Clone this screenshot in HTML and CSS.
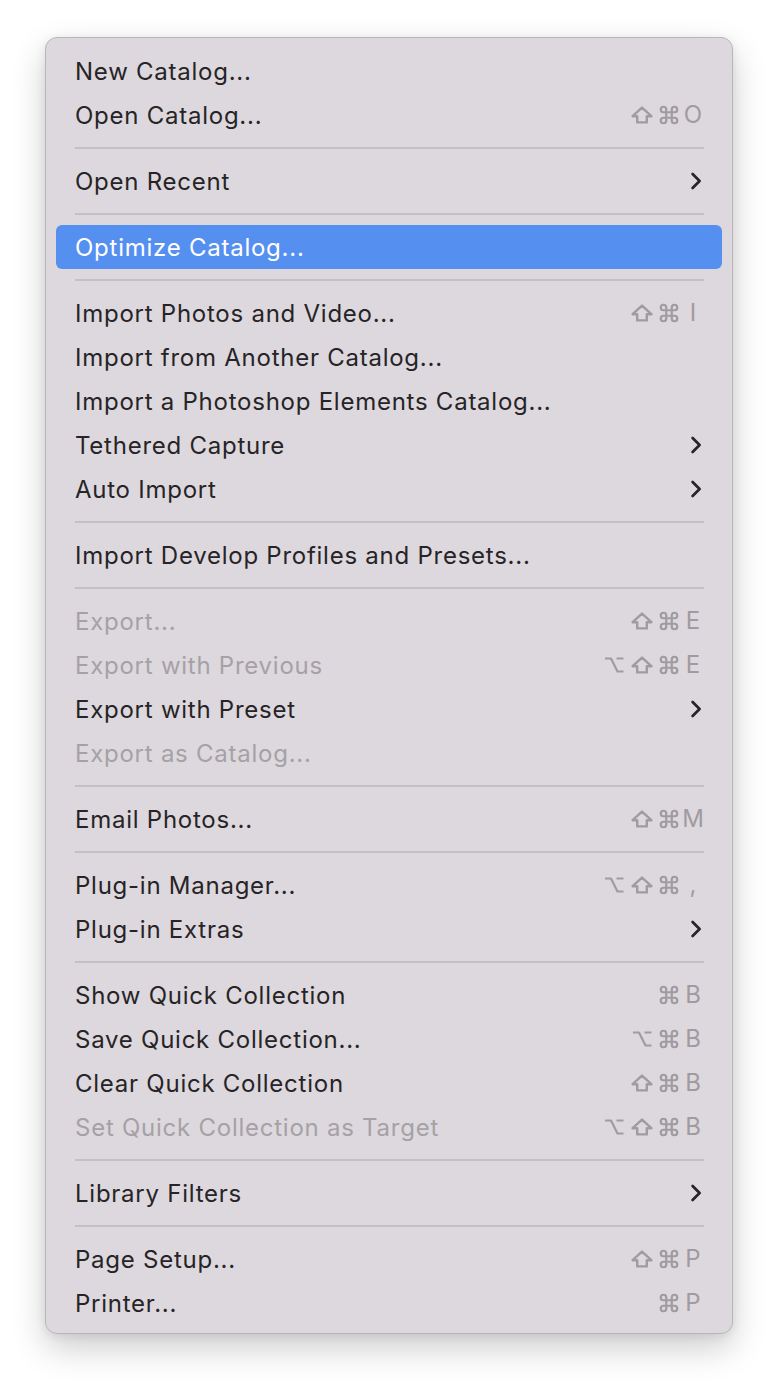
FILE: index.html
```html
<!DOCTYPE html>
<html>
<head>
<meta charset="utf-8">
<link rel="stylesheet" href="styles.css">
</head>
<body>
<svg width="0" height="0" class="defs">
  <defs>
    <symbol id="opt" viewBox="0 0 20 18"><path d="M1 2.5H7L13.5 15.5H19.5M12.5 2.5H19.5" fill="none" stroke="currentColor" stroke-width="2.2" stroke-linejoin="round"/></symbol>
    <symbol id="shift" viewBox="0 0 22 18"><path d="M11 1.6L20.4 10.2H15.8V16.4H6.2V10.2H1.6Z" fill="none" stroke="currentColor" stroke-width="2.4" stroke-linejoin="round"/></symbol>
    <symbol id="cmd" viewBox="0 0 24 24"><path d="M15 6v12a3 3 0 1 0 3-3H6a3 3 0 1 0 3 3V6a3 3 0 1 0-3 3h12a3 3 0 1 0-3-3" fill="none" stroke="currentColor" stroke-width="2.4" stroke-linejoin="round"/></symbol>
    <symbol id="chev" viewBox="0 0 14 22"><path d="M2.6 4L9.6 11L2.6 18" fill="none" stroke="currentColor" stroke-width="2.7" stroke-linecap="round" stroke-linejoin="round"/></symbol>
  </defs>
</svg>
<div class="menu">
  <div class="item"><span class="label">New Catalog...</span></div>
  <div class="item"><span class="label">Open Catalog...</span>
    <span class="keys"><span class="mod"><svg class="i-shift"><use href="#shift"/></svg></span><span class="mod cm"><svg class="i-cmd"><use href="#cmd"/></svg></span><span class="key">O</span></span></div>
  <div class="sep"></div>
  <div class="item"><span class="label">Open Recent</span><svg class="chev"><use href="#chev"/></svg></div>
  <div class="sep"></div>
  <div class="item active"><span class="label">Optimize Catalog...</span></div>
  <div class="sep"></div>
  <div class="item"><span class="label">Import Photos and Video...</span>
    <span class="keys"><span class="mod"><svg class="i-shift"><use href="#shift"/></svg></span><span class="mod cm"><svg class="i-cmd"><use href="#cmd"/></svg></span><span class="key thin">I</span></span></div>
  <div class="item"><span class="label">Import from Another Catalog...</span></div>
  <div class="item"><span class="label">Import a Photoshop Elements Catalog...</span></div>
  <div class="item"><span class="label">Tethered Capture</span><svg class="chev"><use href="#chev"/></svg></div>
  <div class="item"><span class="label">Auto Import</span><svg class="chev"><use href="#chev"/></svg></div>
  <div class="sep"></div>
  <div class="item"><span class="label">Import Develop Profiles and Presets...</span></div>
  <div class="sep"></div>
  <div class="item disabled"><span class="label">Export...</span>
    <span class="keys"><span class="mod"><svg class="i-shift"><use href="#shift"/></svg></span><span class="mod cm"><svg class="i-cmd"><use href="#cmd"/></svg></span><span class="key">E</span></span></div>
  <div class="item disabled"><span class="label">Export with Previous</span>
    <span class="keys"><span class="mod"><svg class="i-opt"><use href="#opt"/></svg></span><span class="mod"><svg class="i-shift"><use href="#shift"/></svg></span><span class="mod cm"><svg class="i-cmd"><use href="#cmd"/></svg></span><span class="key">E</span></span></div>
  <div class="item"><span class="label">Export with Preset</span><svg class="chev"><use href="#chev"/></svg></div>
  <div class="item disabled"><span class="label">Export as Catalog...</span></div>
  <div class="sep"></div>
  <div class="item"><span class="label">Email Photos...</span>
    <span class="keys"><span class="mod"><svg class="i-shift"><use href="#shift"/></svg></span><span class="mod cm"><svg class="i-cmd"><use href="#cmd"/></svg></span><span class="key">M</span></span></div>
  <div class="sep"></div>
  <div class="item"><span class="label">Plug-in Manager...</span>
    <span class="keys"><span class="mod"><svg class="i-opt"><use href="#opt"/></svg></span><span class="mod"><svg class="i-shift"><use href="#shift"/></svg></span><span class="mod cm"><svg class="i-cmd"><use href="#cmd"/></svg></span><span class="key">,</span></span></div>
  <div class="item"><span class="label">Plug-in Extras</span><svg class="chev"><use href="#chev"/></svg></div>
  <div class="sep"></div>
  <div class="item"><span class="label">Show Quick Collection</span>
    <span class="keys"><span class="mod cm"><svg class="i-cmd"><use href="#cmd"/></svg></span><span class="key">B</span></span></div>
  <div class="item"><span class="label">Save Quick Collection...</span>
    <span class="keys"><span class="mod"><svg class="i-opt"><use href="#opt"/></svg></span><span class="mod cm"><svg class="i-cmd"><use href="#cmd"/></svg></span><span class="key">B</span></span></div>
  <div class="item"><span class="label">Clear Quick Collection</span>
    <span class="keys"><span class="mod"><svg class="i-shift"><use href="#shift"/></svg></span><span class="mod cm"><svg class="i-cmd"><use href="#cmd"/></svg></span><span class="key">B</span></span></div>
  <div class="item disabled"><span class="label">Set Quick Collection as Target</span>
    <span class="keys"><span class="mod"><svg class="i-opt"><use href="#opt"/></svg></span><span class="mod"><svg class="i-shift"><use href="#shift"/></svg></span><span class="mod cm"><svg class="i-cmd"><use href="#cmd"/></svg></span><span class="key">B</span></span></div>
  <div class="sep"></div>
  <div class="item"><span class="label">Library Filters</span><svg class="chev"><use href="#chev"/></svg></div>
  <div class="sep"></div>
  <div class="item"><span class="label">Page Setup...</span>
    <span class="keys"><span class="mod"><svg class="i-shift"><use href="#shift"/></svg></span><span class="mod cm"><svg class="i-cmd"><use href="#cmd"/></svg></span><span class="key">P</span></span></div>
  <div class="item"><span class="label">Printer...</span>
    <span class="keys"><span class="mod cm"><svg class="i-cmd"><use href="#cmd"/></svg></span><span class="key">P</span></span></div>
</div>
</body>
</html>
```

FILE: styles.css
```css
html, body {
  margin: 0;
  padding: 0;
  background: #ffffff;
}

body {
  min-height: 1388px;
}

.defs {
  position: absolute;
  width: 0;
  height: 0;
  overflow: hidden;
}

.menu {
  margin: 37px 45px 0 45px;
  padding: 11px 10px 8px 10px;
  box-sizing: content-box;
  width: 666px;
  background: #ddd8dd;
  border: 1px solid #bab5ba;
  border-radius: 12px;
  box-shadow: 0 14px 34px rgba(0, 0, 0, 0.2), 0 2px 10px rgba(0, 0, 0, 0.08);
  font-family: "Inter", "Liberation Sans", sans-serif;
  font-size: 24px;
  letter-spacing: 0.75px;
  color: #262426;
}

.item {
  height: 44px;
  display: flex;
  align-items: center;
  padding: 0 18px 0 19px;
  border-radius: 6px;
}

.label {
  flex: 1;
  white-space: nowrap;
}

.item.active {
  background: #5590f1;
  color: #ffffff;
}

.item.disabled {
  color: #a6a1a6;
}

.keys {
  display: flex;
  align-items: center;
  color: #a09ba0;
  letter-spacing: 0;
}

.mod {
  width: 28px;
  height: 20px;
  display: flex;
  align-items: center;
  justify-content: center;
}

.mod.cm {
  width: 26px;
}

.key {
  width: 22px;
  text-align: center;
  font-size: 24px;
  line-height: 1;
}

.i-opt {
  width: 20px;
  height: 18px;
}

.i-shift {
  width: 22px;
  height: 18px;
}

.i-cmd {
  width: 22px;
  height: 22px;
}

.chev {
  width: 14px;
  height: 22px;
  color: #262426;
}

.sep {
  height: 2px;
  margin: 10px 18px 10px 19px;
  background: #c4bfc4;
}
```
